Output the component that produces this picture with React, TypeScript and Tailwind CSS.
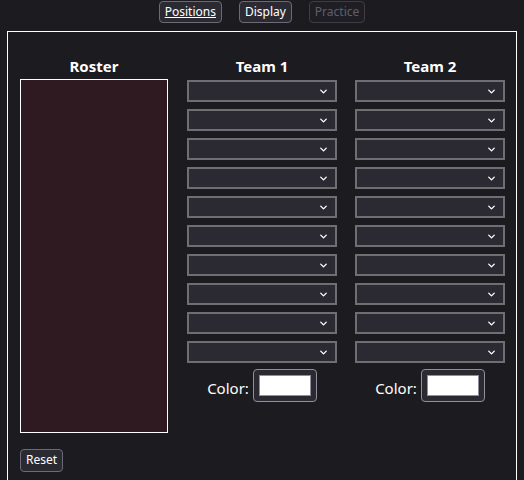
import { ChevronDown } from "lucide-react";

const slots = Array.from({ length: 10 });

function Slot() {
  return (
    <div className="relative h-[22px] w-[150px] border-2 border-[#6f6f73] bg-[#2b2a33]">
      <ChevronDown className="absolute right-[6px] top-[4px] h-[11px] w-[11px] text-white" strokeWidth={3} />
    </div>
  );
}

function TeamColumn({ name }: { name: string }) {
  return (
    <div className="flex w-[150px] flex-col items-center">
      <div className="h-[22px] text-[15px] font-bold leading-[17px] text-white">{name}</div>
      <div className="flex flex-col gap-[7px]">
        {slots.map((_, i) => (
          <Slot key={i} />
        ))}
      </div>
      <div className="mt-[6px] flex items-center gap-[4px]">
        <span className="pt-[6px] text-[15px] text-white">Color:</span>
        <div className="flex h-[33px] w-[64px] items-center justify-center rounded-[4px] border border-[#8f8f9d] bg-[#2b2a33]">
          <div className="h-[21px] w-[52px] border border-[#8f8f9d] bg-white" />
        </div>
      </div>
    </div>
  );
}

export default function App() {
  return (
    <div className="h-[480px] w-[524px] overflow-hidden bg-[#1c1b20] font-['Noto_Sans',sans-serif] text-white">
      <div className="flex h-[31px] justify-center gap-[17px] pt-[1px]">
        <button className="h-[22px] rounded-[4px] border border-[#6b6a78] bg-[#2b2a33] px-[5px] text-[12px] leading-[20px] text-white underline">
          Positions
        </button>
        <button className="h-[22px] rounded-[4px] border border-[#6b6a78] bg-[#2b2a33] px-[5px] text-[12px] leading-[20px] text-white">
          Display
        </button>
        <button disabled className="h-[22px] rounded-[4px] border border-[#3f3e46] bg-[#1f1e24] px-[5px] text-[12px] leading-[20px] text-[#5f5e68]">
          Practice
        </button>
      </div>
      <div className="ml-[7px] h-[470px] w-[510px] border border-white px-[12px] pt-[26px]">
        <div className="flex gap-[19px]">
          <div className="flex w-[148px] flex-col items-center">
            <div className="h-[21px] text-[15px] font-bold leading-[17px] text-white">Roster</div>
            <div className="h-[354px] w-[148px] border border-white bg-[#2e1a20]" />
            <div className="mt-[13px] self-start">
              <button className="h-[23px] rounded-[4px] border border-[#6b6a78] bg-[#2b2a33] px-[5px] text-[12px] leading-[20px] text-white">
                Reset
              </button>
            </div>
          </div>
          <TeamColumn name="Team 1" />
          <div className="-ml-[1px]">
            <TeamColumn name="Team 2" />
          </div>
        </div>
      </div>
    </div>
  );
}
